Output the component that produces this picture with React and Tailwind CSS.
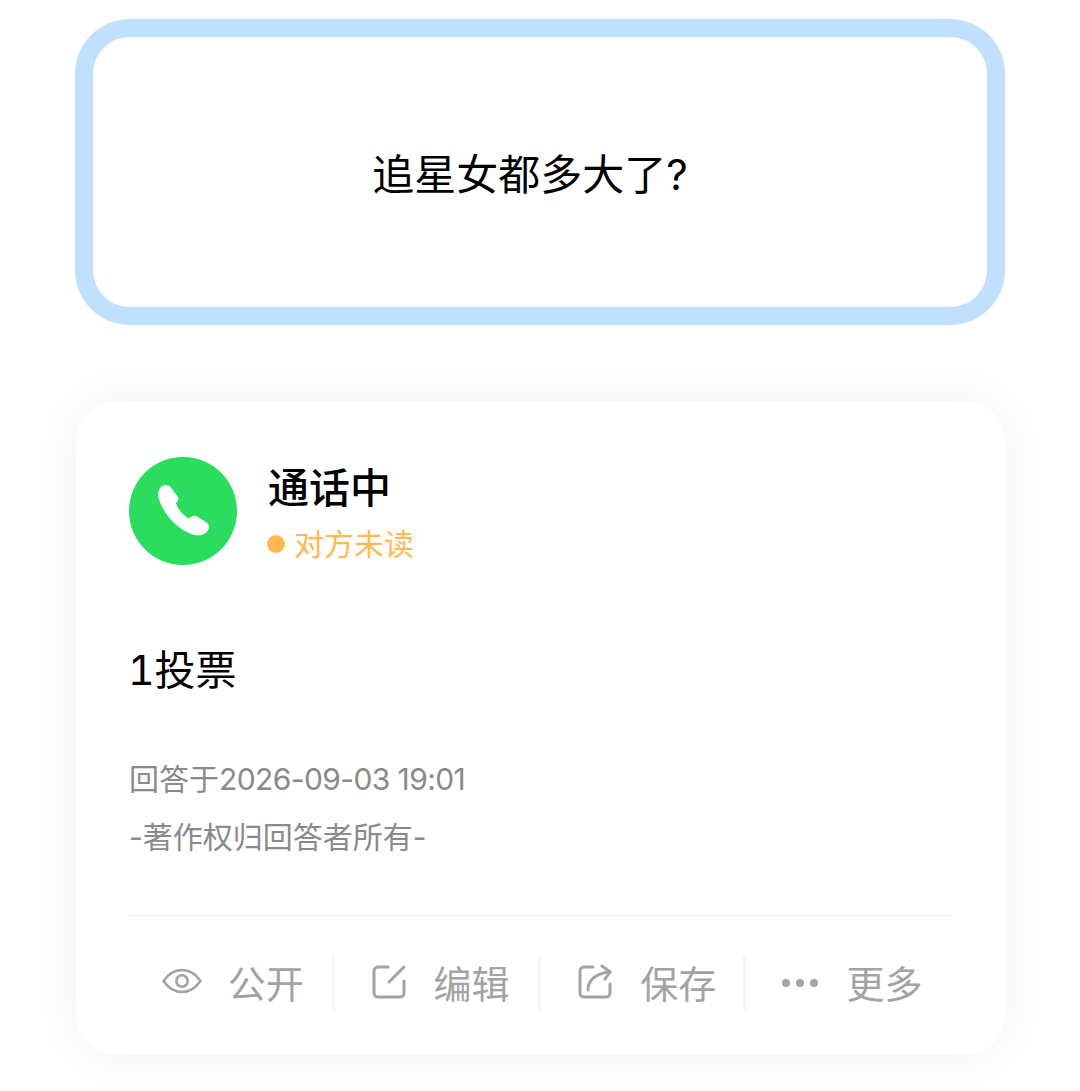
import React from 'react';

const PhoneIcon = () => (
  <svg width="51" height="51" viewBox="0 0 50 50" fill="#ffffff" className="-mt-[2px]">
    <path d="M3 2C5 0 9-.5 12 1.500L19 11c1.500 2 1 4.500-1.500 7 2.500 6 6.500 11 12.500 15 2.500-2.500 5-3.500 7.500-2.500l10 6c3 2 3 6 1 8.500-3 4-8.500 5.500-14.500 3.500C18 43 5 28 .5 12.500-.5 8.500.5 4 3 2z" />
  </svg>
);

const EyeIcon = () => (
  <svg width="40" height="40" viewBox="0 0 40 40" fill="none" stroke="#a3a3a3" strokeWidth="2.600" className="-mt-[4px]">
    <path d="M1.500 20C6 13.500 12.500 9 20 9s14 4.500 18.500 11C34 26.500 27.500 31 20 31S6 26.500 1.500 20z" strokeLinejoin="round" />
    <circle cx="20" cy="20" r="5.700" />
  </svg>
);

const EditIcon = () => (
  <svg width="36" height="36" viewBox="0 0 36 36" fill="none" stroke="#a3a3a3" strokeWidth="3" strokeLinecap="round" className="-mt-[2px]">
    <path d="M17 3H7a4 4 0 0 0-4 4v22a4 4 0 0 0 4 4h22a4 4 0 0 0 4-4V17" />
    <path d="M18 18 33 3" />
  </svg>
);

const SaveIcon = () => (
  <svg width="36" height="36" viewBox="0 0 36 36" fill="none" stroke="#a3a3a3" strokeWidth="3" strokeLinecap="round" strokeLinejoin="round" className="-mt-[2px]">
    <path d="M16 3H7a4 4 0 0 0-4 4v22a4 4 0 0 0 4 4h22a4 4 0 0 0 4-4V20" />
    <path d="M11 26c0-10 8-17 22-18" />
    <path d="M25 2l8 6-5 7" />
  </svg>
);

const MoreIcon = () => (
  <svg width="38" height="10" viewBox="0 0 38 10" fill="#a3a3a3">
    <circle cx="5" cy="5" r="4" />
    <circle cx="19" cy="5" r="4" />
    <circle cx="33" cy="5" r="4" />
  </svg>
);

const actions = [
  { label: '公开', icon: <EyeIcon />, box: 'gap-[26px] pl-[5px]' },
  { label: '编辑', icon: <EditIcon />, box: 'gap-[27px] pl-[8px]' },
  { label: '保存', icon: <SaveIcon />, box: 'gap-[27px] pl-[10px]' },
  { label: '更多', icon: <MoreIcon />, box: 'gap-[28px] pl-[5px]' },
];

export default function App() {
  return (
    <div className="w-[1080px] h-[1091px] overflow-hidden bg-white pt-[19px] px-[75px] font-['Inter','Noto_Sans_CJK_SC',sans-serif]">
      <div className="h-[306px] w-[930px] rounded-[55px] border-[18px] border-[#c1e0fd] flex items-center justify-center pr-[20px] pt-[6px]">
        <span className="text-[42px] leading-none text-black">追星女都多大了?</span>
      </div>

      <div className="mt-[76px] ml-px h-[654px] w-[929px] rounded-[40px] bg-white shadow-[0_0_50px_rgba(0,0,0,0.05)] px-[53px] pt-[56px]">
        <div className="flex items-center gap-[31px]">
          <div className="w-[108px] h-[108px] rounded-full bg-[#2bdc5f] flex items-center justify-center">
            <PhoneIcon />
          </div>
          <div className="mt-[4px]">
            <div className="text-[41px] leading-[48px] font-medium text-black">通话中</div>
            <div className="mt-[14px] flex items-center gap-[9px]">
              <span className="w-[18px] h-[18px] rounded-full bg-[#ffb950] -ml-px" />
              <span className="text-[30px] leading-[36px] text-[#ffb950]">对方未读</span>
            </div>
          </div>
        </div>

        <div className="mt-[81px] -ml-px text-[41px] leading-[48px] text-black tabular-nums">1投票</div>

        <div className="mt-[65px] text-[30px] leading-[40px] text-[#8a8a8a]">
          回答于<span className="tracking-[-0.6px]">2026-09-03 19:01</span>
        </div>
        <div className="mt-[18px] text-[30px] leading-[40px] text-[#8a8a8a]">-著作权归回答者所有-</div>

        <div className="mt-[57px] border-t-[3px] border-[#f5f5f5] pt-[39px] flex">
          {actions.map((a, i) => (
            <div
              key={a.label}
              className={`w-[206px] h-[54px] flex items-center justify-center ${a.box} ${i < 3 ? 'border-r-[3px] border-[#f5f5f5]' : ''}`}
            >
              {a.icon}
              <span className="mt-[2px] text-[38px] leading-none text-[#a3a3a3]">{a.label}</span>
            </div>
          ))}
        </div>
      </div>
    </div>
  );
}
